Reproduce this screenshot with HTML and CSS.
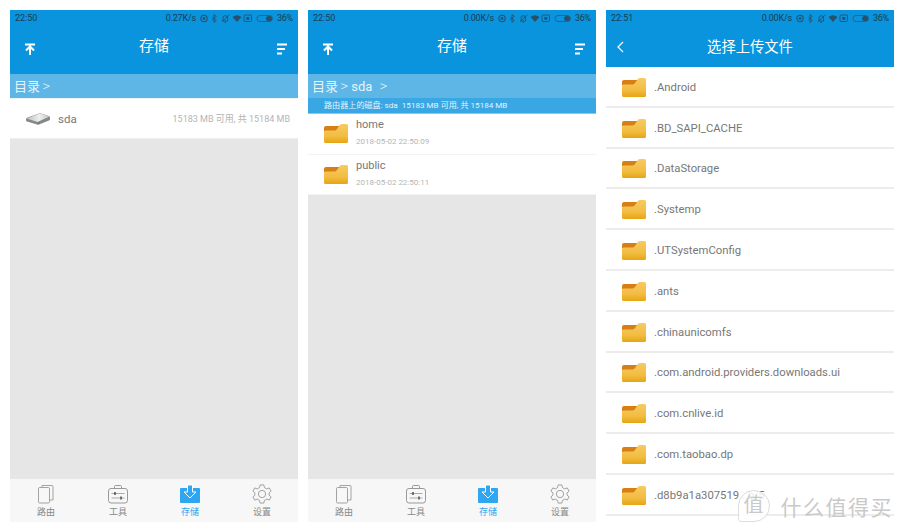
FILE: index.html
```html
<!DOCTYPE html>
<html lang="en">

<head>
    <meta charset="UTF-8">
    <meta name="viewport" content="width=device-width, initial-scale=1.0">
    <title>存储</title>
    <link rel="stylesheet" href="styles.css">
</head>

<body>
    <svg class="defs" width="0" height="0">
        <defs>
            <linearGradient id="folder-fill" x1="0" y1="0" x2="0" y2="1">
                <stop offset="0" stop-color="#f6cb63" />
                <stop offset="0.65" stop-color="#f2bc40" />
                <stop offset="1" stop-color="#e6a512" />
            </linearGradient>
            <linearGradient id="disk-top" x1="0" y1="0" x2="1" y2="0">
                <stop offset="0" stop-color="#b9bdbc" />
                <stop offset="0.55" stop-color="#eef0ef" />
                <stop offset="1" stop-color="#c4c7c6" />
            </linearGradient>
        </defs>
        <symbol id="folder" viewBox="0 0 24 19">
            <path d="M0 4Q0 2 2 2H16V7H0Z" fill="#d77f14" />
            <path d="M0 8Q0 6.500 1.500 6.500H10.500Q12 6.500 13 5L15.800 1Q16.500 0 18 0H22.500Q24 0 24 1.500V17.500Q24 19 22.500 19H1.500Q0 19 0 17.500Z" fill="url(#folder-fill)" />
        </symbol>
        <symbol id="status" viewBox="0 0 73 9">
            <circle cx="4" cy="4.500" r="3.200" fill="none" stroke="#28506c" stroke-width="1.100" />
            <circle cx="4" cy="4.500" r="1.400" fill="#28506c" />
            <path d="M14 .5v8l2.300-2-4-3.300m1.700-2.700 2.300 2-4 3.300" fill="none" stroke="#28506c" stroke-width=".9" />
            <path d="M23 7V4a2.300 2.300 0 0 1 4.600 0V7Zm-1 .7 7.500-7M24.500 8.300h1.500" fill="none" stroke="#28506c" stroke-width=".9" />
            <path d="M32.500 3Q37-.5 41.500 3L37 8Z" fill="#28506c" />
            <rect x="44" y="1" width="7.500" height="6.500" rx="1" fill="none" stroke="#28506c" stroke-width=".9" />
            <rect x="46.300" y="3" width="3" height="2.800" fill="#28506c" />
            <rect x="57" y="1.500" width="15.500" height="6" rx="3" fill="none" stroke="#28506c" stroke-width=".7" />
            <rect x="66" y="2" width="6" height="5" rx="2.500" fill="#28506c" />
        </symbol>
        <symbol id="upload" viewBox="0 0 12 12">
            <path d="M1 1.500H11M6 12V3.500M2 7.500 6 3.500l4 4" fill="none" stroke="#fff" stroke-width="2" />
        </symbol>
        <symbol id="sort" viewBox="0 0 12 11">
            <path d="M1 1H11M1 5.500H9M1 10H6" fill="none" stroke="#fff" stroke-width="1.800" />
        </symbol>
        <symbol id="tab-route" viewBox="0 0 20 20">
            <path d="M6 3V1.500H16Q17 1.500 17 2.500V16H13.500" fill="none" stroke="#a3a3a3" stroke-width="1" />
            <rect x="2.500" y="3.500" width="11" height="15.500" rx="1.200" fill="none" stroke="#a3a3a3" stroke-width="1" />
        </symbol>
        <symbol id="tab-tools" viewBox="0 0 20 20">
            <path d="M6.500 4.500V2.500Q6.500 1.500 7.500 1.500H12.500Q13.500 1.500 13.500 2.500V4.500" fill="none" stroke="#999" stroke-width="1" />
            <rect x=".500" y="4.500" width="19" height="14.500" rx="2.500" fill="none" stroke="#999" stroke-width="1" />
            <path d="M3.500 9.500H16.500M3.500 14H16.500" stroke="#aaa" stroke-width="1" />
            <path d="M7 8V11M13 12.500V15.500" stroke="#555" stroke-width="1.600" />
        </symbol>
        <symbol id="tab-store" viewBox="0 0 20 20">
            <path d="M1 4H19Q20 4 20 5V18Q20 19 19 19H1Q0 19 0 18V5Q0 4 1 4Z" fill="#2fa6ef" />
            <path d="M7.500 1H12.500V8H16L10 14 4 8H7.500Z" fill="#2fa6ef" stroke="#fff" stroke-width="1" stroke-linejoin="round" />
        </symbol>
        <symbol id="tab-settings" viewBox="0 0 22 22">
            <path d="M9 1H13L13.700 4 16.300 5.400 19 4.300 21 7.800 18.800 9.800V12.200L21 14.200 19 17.700 16.300 16.600 13.700 18 13 21H9L8.300 18 5.700 16.600 3 17.700 1 14.200 3.200 12.200V9.800L1 7.800 3 4.300 5.700 5.400 8.300 4Z" fill="none" stroke="#999" stroke-width="1" stroke-linejoin="round" />
            <circle cx="11" cy="11" r="4" fill="none" stroke="#999" stroke-width="1" />
        </symbol>
    </svg>

    <div class="phone">
        <div class="header">
            <div class="status"><span>22:50</span><span class="status-right">0.27K/s <svg class="status-icons"><use href="#status" /></svg> 36%</span></div>
            <div class="toolbar">
                <svg class="tool-icon"><use href="#upload" /></svg>
                <span class="title">存储</span>
                <svg class="tool-icon tool-end"><use href="#sort" /></svg>
            </div>
        </div>
        <div class="crumb">目录 <span class="sep">&gt;</span></div>
        <div class="disk-row">
            <svg class="disk" viewBox="0 0 24 12">
                <path d="M0 6Q0 5 1.500 4.500L13 .5Q14 .2 15 .5L23 3Q24 3.500 24 4.500V6.500Q24 7 23 7.500L13 11.500Q12 12 11 11.500L1 8.500Q0 8 0 7Z" fill="#85898a" />
                <path d="M.5 5.500 13 .8Q14 .4 15 .8L23.500 3.500 12 8.800Q11.500 9 11 8.800Z" fill="url(#disk-top)" />
                <path d="M12 10 14 9.200V10.200L12 11Z" fill="#4c8a3a" />
            </svg>
            <span class="disk-name">sda</span>
            <span class="disk-size">15183 MB 可用, 共 15184 MB</span>
        </div>
        <div class="empty"></div>
        <div class="tabs">
            <div class="tab"><svg class="tab-icon"><use href="#tab-route" /></svg>路由</div>
            <div class="tab"><svg class="tab-icon"><use href="#tab-tools" /></svg>工具</div>
            <div class="tab active"><svg class="tab-icon"><use href="#tab-store" /></svg>存储</div>
            <div class="tab"><svg class="tab-icon"><use href="#tab-settings" /></svg>设置</div>
        </div>
    </div>

    <div class="phone">
        <div class="header">
            <div class="status"><span>22:50</span><span class="status-right">0.00K/s <svg class="status-icons"><use href="#status" /></svg> 36%</span></div>
            <div class="toolbar">
                <svg class="tool-icon"><use href="#upload" /></svg>
                <span class="title">存储</span>
                <svg class="tool-icon tool-end"><use href="#sort" /></svg>
            </div>
        </div>
        <div class="crumb">目录 <span class="sep">&gt;</span> sda <span class="sep sep-far">&gt;</span></div>
        <div class="disk-info">路由器上的磁盘: sda &nbsp;15183 MB 可用, 共 15184 MB</div>
        <div class="dir-row">
            <svg class="folder"><use href="#folder" /></svg>
            <div>
                <div class="dir-name">home</div>
                <div class="dir-date">2018-05-02 22:50:09</div>
            </div>
        </div>
        <div class="dir-row">
            <svg class="folder"><use href="#folder" /></svg>
            <div>
                <div class="dir-name">public</div>
                <div class="dir-date">2018-05-02 22:50:11</div>
            </div>
        </div>
        <div class="empty"></div>
        <div class="tabs">
            <div class="tab"><svg class="tab-icon"><use href="#tab-route" /></svg>路由</div>
            <div class="tab"><svg class="tab-icon"><use href="#tab-tools" /></svg>工具</div>
            <div class="tab active"><svg class="tab-icon"><use href="#tab-store" /></svg>存储</div>
            <div class="tab"><svg class="tab-icon"><use href="#tab-settings" /></svg>设置</div>
        </div>
    </div>

    <div class="phone">
        <div class="header header-short">
            <div class="status"><span>22:51</span><span class="status-right">0.00K/s <svg class="status-icons"><use href="#status" /></svg> 36%</span></div>
            <div class="toolbar toolbar-short">
                <svg class="back" viewBox="0 0 8 12"><path d="M7 1 2 6l5 5" fill="none" stroke="#fff" stroke-width="1.200" /></svg>
                <span class="title title-long">选择上传文件</span>
            </div>
        </div>
        <div class="file-row"><svg class="folder"><use href="#folder" /></svg>.Android</div>
        <div class="file-row"><svg class="folder"><use href="#folder" /></svg>.BD_SAPI_CACHE</div>
        <div class="file-row"><svg class="folder"><use href="#folder" /></svg>.DataStorage</div>
        <div class="file-row"><svg class="folder"><use href="#folder" /></svg>.Systemp</div>
        <div class="file-row"><svg class="folder"><use href="#folder" /></svg>.UTSystemConfig</div>
        <div class="file-row"><svg class="folder"><use href="#folder" /></svg>.ants</div>
        <div class="file-row"><svg class="folder"><use href="#folder" /></svg>.chinaunicomfs</div>
        <div class="file-row"><svg class="folder"><use href="#folder" /></svg>.com.android.providers.downloads.ui</div>
        <div class="file-row"><svg class="folder"><use href="#folder" /></svg>.com.cnlive.id</div>
        <div class="file-row"><svg class="folder"><use href="#folder" /></svg>.com.taobao.dp</div>
        <div class="file-row"><svg class="folder"><use href="#folder" /></svg>.d8b9a1a307519 ..b.'5</div>
        <div class="watermark"><span class="watermark-badge">值</span>什么值得买</div>
    </div>
</body>

</html>
```

FILE: styles.css
```css
body {
    font-family: 'Roboto', 'Noto Sans CJK SC', sans-serif;
    background-color: #fff;
    margin: 0;
    height: 532px;
    padding: 10px;
    box-sizing: border-box;
    display: flex;
    gap: 10px;
    overflow: hidden;
}

.defs {
    position: absolute;
}

.phone {
    width: 288px;
    height: 512px;
    display: flex;
    flex-direction: column;
    background-color: #fff;
    position: relative;
    overflow: hidden;
}

.header {
    background-color: #0a94dd;
    height: 64px;
    flex-shrink: 0;
}

.header-short {
    height: 57px;
}

.status {
    height: 16px;
    padding: 0 5px;
    display: flex;
    justify-content: space-between;
    align-items: center;
    font-size: 9px;
    color: #1d3b52;
}

.status-right {
    display: flex;
    align-items: center;
    gap: 4px;
    letter-spacing: -0.2px;
}

.status-icons {
    width: 73px;
    height: 9px;
}

.toolbar {
    display: grid;
    grid-template-columns: 1fr auto 1fr;
    align-items: center;
    padding: 0 10px 0 14px;
    height: 40px;
}

.toolbar-short {
    display: flex;
    position: relative;
    height: 41px;
    padding-left: 10px;
}

.tool-icon {
    width: 12px;
    height: 12px;
    margin-top: 6px;
}

.tool-end {
    justify-self: end;
}

.title {
    color: #fff;
    font-size: 15px;
    margin-top: -3px;
    margin-right: 4px;
}

.title-long {
    position: absolute;
    left: 0;
    right: 0;
    top: 9px;
    margin: 0;
    text-align: center;
    font-size: 14.300px;
}

.back {
    width: 8px;
    height: 12px;
}

.crumb {
    background-color: #5db6e6;
    color: #e6f4fb;
    height: 24px;
    line-height: 24px;
    padding-left: 4px;
    font-size: 13px;
    flex-shrink: 0;
}

.sep {
    font-size: 15px;
    font-weight: 300;
    margin-left: -1px;
}

.sep-far {
    margin-left: 4px;
}

.disk-info {
    background-color: #39a7e3;
    border-bottom: 1px solid #8ccaec;
    color: #e4f3fb;
    height: 15px;
    line-height: 15px;
    padding-left: 16px;
    font-size: 8.100px;
    flex-shrink: 0;
}

.disk-row {
    height: 39px;
    background-color: #fff;
    border-bottom: 1px solid #eee;
    border-top: 1px solid #eef5fa;
    display: flex;
    align-items: center;
    padding: 0 8px 0 16px;
    flex-shrink: 0;
}

.disk {
    width: 24px;
    height: 12px;
}

.disk-name {
    margin-left: 8px;
    color: #777;
    font-size: 11.500px;
}

.disk-size {
    margin-left: auto;
    color: #b5b5b5;
    font-size: 9px;
}

.dir-row {
    height: 40.500px;
    box-sizing: border-box;
    border-bottom: 1px solid #f3f3f3;
    display: flex;
    align-items: center;
    padding-left: 16px;
    gap: 8px;
    flex-shrink: 0;
}

.folder {
    width: 24px;
    height: 19px;
    flex-shrink: 0;
}

.dir-name {
    color: #777;
    font-size: 11px;
    line-height: 14px;
    margin-top: -1px;
}

.dir-date {
    color: #b5b5b5;
    font-size: 8px;
    line-height: 12px;
    margin-top: 4px;
}

.empty {
    flex: 1;
    background-color: #e6e6e6;
}

.tabs {
    height: 43px;
    flex-shrink: 0;
    background-color: #f7f7f7;
    display: flex;
}

.tab {
    flex: 1;
    display: flex;
    flex-direction: column;
    align-items: center;
    padding-top: 5px;
    font-size: 9px;
    line-height: 11px;
    color: #888;
}

.tab.active {
    color: #2fa6ef;
}

.tab-icon {
    width: 20px;
    height: 20px;
    margin-bottom: 3px;
}

.file-row {
    height: 40.800px;
    box-sizing: border-box;
    border-bottom: 2px solid #ececec;
    display: flex;
    align-items: center;
    padding: 2px 0 0 16px;
    gap: 8px;
    color: #777;
    font-size: 11.300px;
    flex-shrink: 0;
}

.watermark {
    position: absolute;
    right: 1px;
    bottom: 0;
    display: flex;
    align-items: center;
    gap: 11px;
    font-size: 21px;
    color: #c9c9c9;
    letter-spacing: 1.500px;
}

.watermark-badge {
    width: 30px;
    height: 30px;
    border: 1px solid #ddd;
    border-radius: 50% 50% 50% 10%;
    background-color: rgba(255, 255, 255, 0.85);
    text-align: center;
    line-height: 28px;
    font-size: 20px;
    letter-spacing: 0;
}
```
